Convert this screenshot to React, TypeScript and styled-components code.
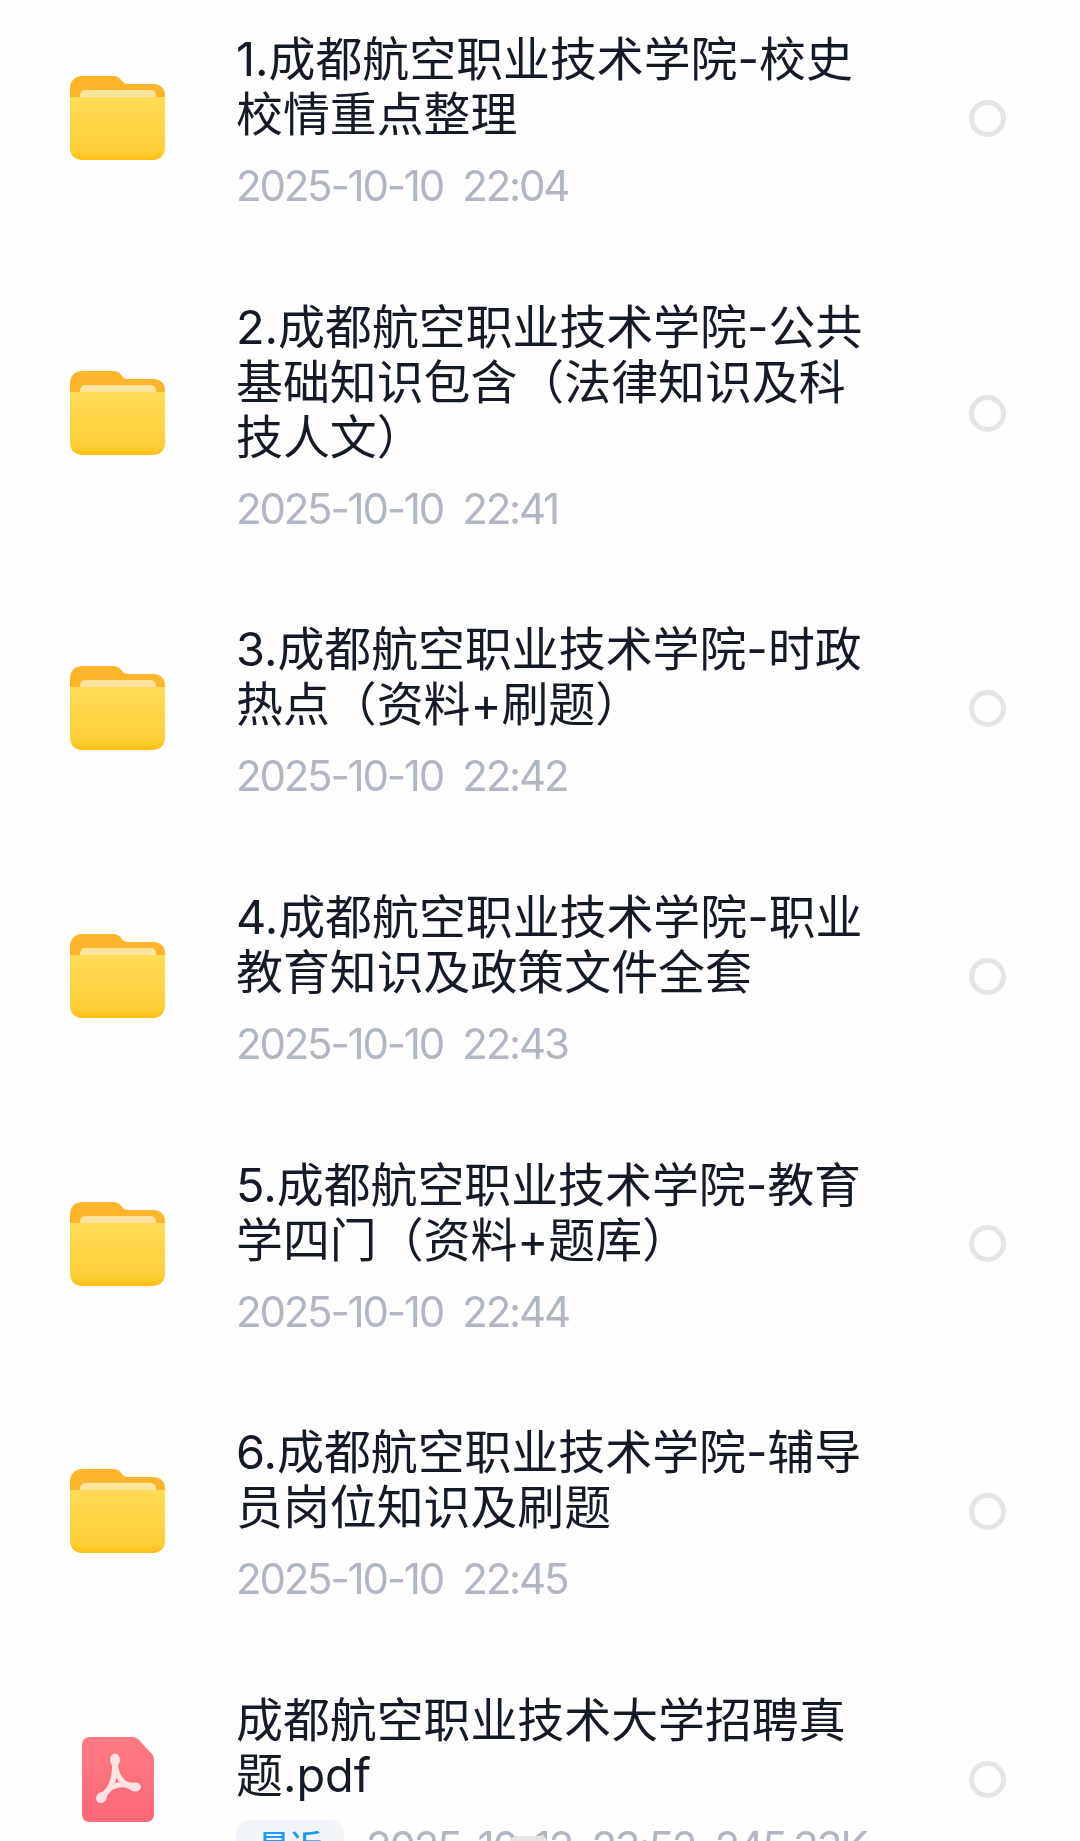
import styled, { createGlobalStyle } from 'styled-components';

const GlobalStyle = createGlobalStyle`
  html, body {
    margin: 0;
    padding: 0;
    background: #fefefe;
  }
`;

type FileRow = {
  kind: 'folder' | 'pdf';
  title: string;
  date?: string;
};

const ROWS: FileRow[] = [
  { kind: 'folder', title: '1.成都航空职业技术学院-校史校情重点整理', date: '2025-10-10  22:04' },
  { kind: 'folder', title: '2.成都航空职业技术学院-公共基础知识包含（法律知识及科技人文）', date: '2025-10-10  22:41' },
  { kind: 'folder', title: '3.成都航空职业技术学院-时政热点（资料+刷题）', date: '2025-10-10  22:42' },
  { kind: 'folder', title: '4.成都航空职业技术学院-职业教育知识及政策文件全套', date: '2025-10-10  22:43' },
  { kind: 'folder', title: '5.成都航空职业技术学院-教育学四门（资料+题库）', date: '2025-10-10  22:44' },
  { kind: 'folder', title: '6.成都航空职业技术学院-辅导员岗位知识及刷题', date: '2025-10-10  22:45' },
  { kind: 'pdf', title: '成都航空职业技术大学招聘真题.pdf' },
];

const FolderIcon = () => (
  <svg width="95" height="84" viewBox="0 0 95 84" aria-hidden="true">
    <defs>
      <linearGradient id="folderFront" x1="0" y1="0" x2="0" y2="1">
        <stop offset="0" stopColor="#ffdc58" />
        <stop offset="0.85" stopColor="#ffcf38" />
        <stop offset="1" stopColor="#ffbe14" />
      </linearGradient>
    </defs>
    <path
      d="M0 12C0 5 5 0 12 0H43C47 0 49 1 51 4L53 6C54 7 56 8 58 8H83C90 8 95 12 95 19V40H0Z"
      fill="#fdb62b"
    />
    <path d="M10 20C10 16 12 14 16 14H80C84 14 86 16 86 20V26H10Z" fill="#fde5a0" />
    <path
      d="M0 21H95V72C95 79 90 84 83 84H12C5 84 0 79 0 72Z"
      fill="url(#folderFront)"
    />
  </svg>
);

const PdfIcon = () => (
  <svg width="72" height="85" viewBox="0 0 72 85" aria-hidden="true">
    <defs>
      <linearGradient id="pdfBody" x1="0" y1="0" x2="0" y2="1">
        <stop offset="0" stopColor="#fe7b82" />
        <stop offset="1" stopColor="#fb6876" />
      </linearGradient>
    </defs>
    <path
      d="M8 0H50C53 0 55 1 57 3L69 16C71 18 72 20 72 23V77C72 82 69 85 64 85H8C3 85 0 82 0 77V8C0 3 3 0 8 0Z"
      fill="url(#pdfBody)"
    />
    <g fill="none" stroke="#fde3e1" strokeWidth="5.5" strokeLinecap="round">
      <path d="M33 24C33 32 36 41 42 46C46 49 50 50 53 50" />
      <path d="M53 49C45 47 36 47 30 50C25 53 22 57 19 61" />
      <path d="M19 61C25 56 29 50 31 43C33 36 33 30 33 24" />
    </g>
    <g fill="#fde3e1">
      <ellipse cx="33" cy="23" rx="5" ry="6.5" />
      <ellipse cx="53" cy="50" rx="6" ry="4.5" />
      <ellipse cx="19.5" cy="60.5" rx="5" ry="6" transform="rotate(40 19.5 60.5)" />
    </g>
  </svg>
);

export default function App() {
  return (
    <>
      <GlobalStyle />
      <Page>
        <List>
          {ROWS.map((row) => (
            <Row key={row.title}>
              <IconCell>{row.kind === 'folder' ? <FolderIcon /> : <PdfIcon />}</IconCell>
              <Body>
                <Title>{row.title}</Title>
                {row.date ? (
                  <Meta>{row.date}</Meta>
                ) : (
                  <Meta>
                    <Badge>最近</Badge>
                    2025-10-12  23:52  245.33K
                    <Smudge />
                  </Meta>
                )}
              </Body>
              <Radio />
            </Row>
          ))}
        </List>
      </Page>
    </>
  );
}

const Page = styled.div`
  width: 1080px;
  height: 1841px;
  overflow: hidden;
  background: #fefefe;
  font-family: Inter, 'Noto Sans CJK SC', sans-serif;
  filter: blur(0.5px);
`;

const List = styled.ul`
  list-style: none;
  margin: 0;
  padding: 31px 0 0 70px;
  display: flex;
  flex-direction: column;
  gap: 93.7px;
`;

const Row = styled.li`
  display: grid;
  grid-template-columns: 95px 1fr 37px;
  column-gap: 72px;
  align-items: center;
  width: 936px;
`;

const IconCell = styled.div`
  display: flex;
  justify-content: center;
  align-items: center;
`;

const Body = styled.div`
  display: flex;
  flex-direction: column;
  max-width: 630px;
  margin-left: -1px;
`;

const Title = styled.div`
  padding-top: 1px;
  font-size: 46.9px;
  line-height: 55px;
  color: #141a27;
`;

const Meta = styled.div`
  position: relative;
  margin: 25px 0 1px;
  height: 37px;
  display: flex;
  align-items: center;
  gap: 22px;
  font-size: 42px;
  line-height: 37px;
  letter-spacing: -2.2px;
  white-space: pre;
  color: #b1b6c4;
`;

const Badge = styled.span`
  flex: none;
  width: 108px;
  height: 54px;
  border-radius: 14px;
  background: #f2f6fa;
  color: #1f9bf2;
  font-size: 32px;
  font-weight: 500;
  line-height: 54px;
  letter-spacing: 0;
  text-align: center;
`;

const Smudge = styled.span`
  position: absolute;
  left: 274px;
  top: 8px;
  width: 37px;
  height: 12px;
  border-radius: 6px;
  background: #e6e6e8;
`;

const Radio = styled.span`
  box-sizing: border-box;
  width: 37px;
  height: 37px;
  border: 5px solid #e5e5e5;
  border-radius: 50%;
`;
